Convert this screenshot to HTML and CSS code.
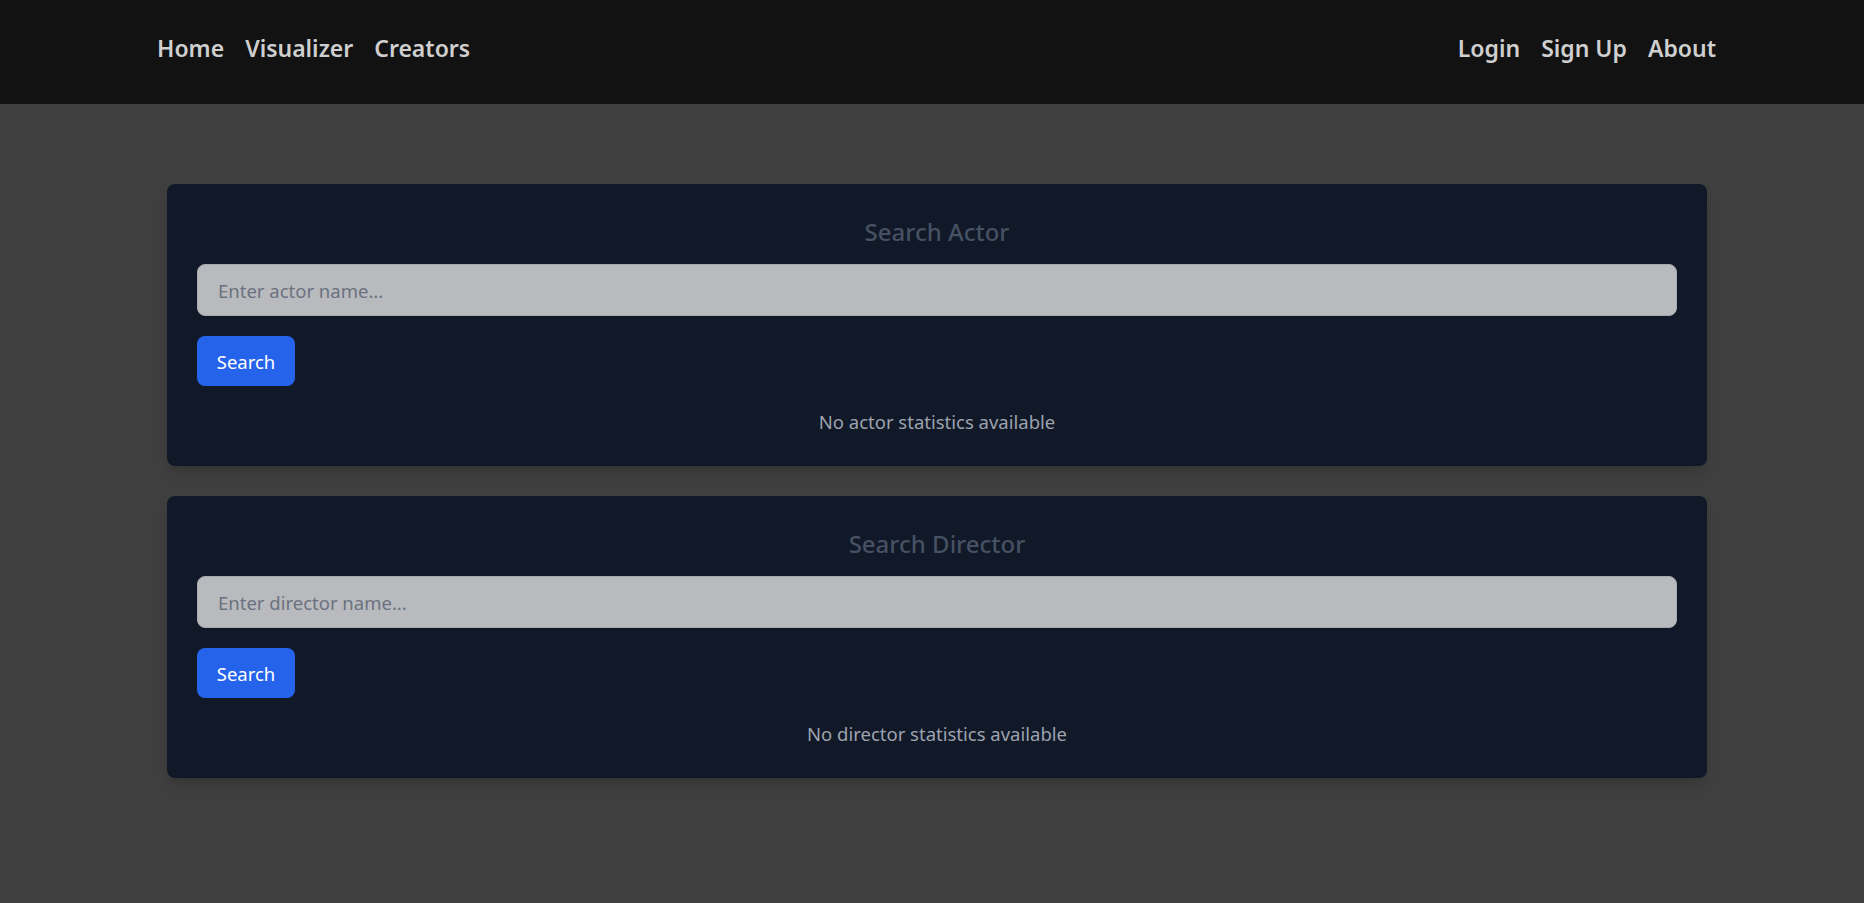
FILE: index.html
```html
<!DOCTYPE html>
<html lang="en">
<head>
<meta charset="utf-8">
<title>Search</title>
<link rel="stylesheet" href="styles.css">
</head>
<body>
<nav class="navbar">
  <div class="nav-group">
    <a class="nav-link" href="#">Home</a>
    <a class="nav-link" href="#">Visualizer</a>
    <a class="nav-link" href="#">Creators</a>
  </div>
  <div class="nav-group">
    <a class="nav-link" href="#">Login</a>
    <a class="nav-link" href="#">Sign Up</a>
    <a class="nav-link" href="#">About</a>
  </div>
</nav>
<main class="content">
  <section class="card">
    <h2 class="card-title">Search Actor</h2>
    <input class="search-input" type="text" placeholder="Enter actor name...">
    <button class="search-btn" type="button">Search</button>
    <p class="empty-msg">No actor statistics available</p>
  </section>
  <section class="card">
    <h2 class="card-title">Search Director</h2>
    <input class="search-input" type="text" placeholder="Enter director name...">
    <button class="search-btn" type="button">Search</button>
    <p class="empty-msg">No director statistics available</p>
  </section>
</main>
</body>
</html>
```
FILE: styles.css
```css
* { box-sizing: border-box; }
html, body { margin: 0; padding: 0; }
body {
  background: #3f3f3f;
  font-family: "Noto Sans", "Open Sans", sans-serif;
  min-height: 903px;
}
.navbar {
  height: 104px;
  background: #121212;
  display: flex;
  justify-content: space-between;
  align-items: center;
  padding: 0 148px 9px 157px;
}
.nav-group {
  display: flex;
  gap: 21px;
  align-items: center;
}
.nav-link {
  color: #cfcfcf;
  text-decoration: none;
  font-size: 23px;
  font-weight: 600;
  line-height: 32px;
}
.content {
  padding: 80px 157px 0 167px;
  display: flex;
  flex-direction: column;
  gap: 30px;
}
.card {
  background: #111827;
  border-radius: 8px;
  padding: 32px 30px 30px;
  display: flex;
  flex-direction: column;
  align-items: flex-start;
  box-shadow: 0 10px 15px -3px rgba(0,0,0,0.12), 0 4px 6px -4px rgba(0,0,0,0.12);
}
.card-title {
  align-self: stretch;
  text-align: center;
  margin: 0 0 16px;
  font-size: 24px;
  line-height: 32px;
  font-weight: 500;
  color: #465163;
}
.search-input {
  align-self: stretch;
  height: 52px;
  border: 1px solid #a7a9ae;
  border-radius: 8px;
  background: #b9babe;
  padding: 0 20px;
  font-family: inherit;
  font-size: 18.5px;
  color: #1f2937;
  margin: 0 0 20px;
  outline: none;
}
.search-input::placeholder { color: #6b7280; }
.search-btn {
  height: 50px;
  width: 98px;
  border: none;
  border-radius: 8px;
  background: #2563eb;
  color: #ffffff;
  font-family: inherit;
  font-size: 18.5px;
  padding: 0;
  cursor: pointer;
}
.empty-msg {
  align-self: stretch;
  text-align: center;
  margin: 22px 0 0;
  font-size: 18.5px;
  line-height: 28px;
  color: #9ca3af;
}
```
